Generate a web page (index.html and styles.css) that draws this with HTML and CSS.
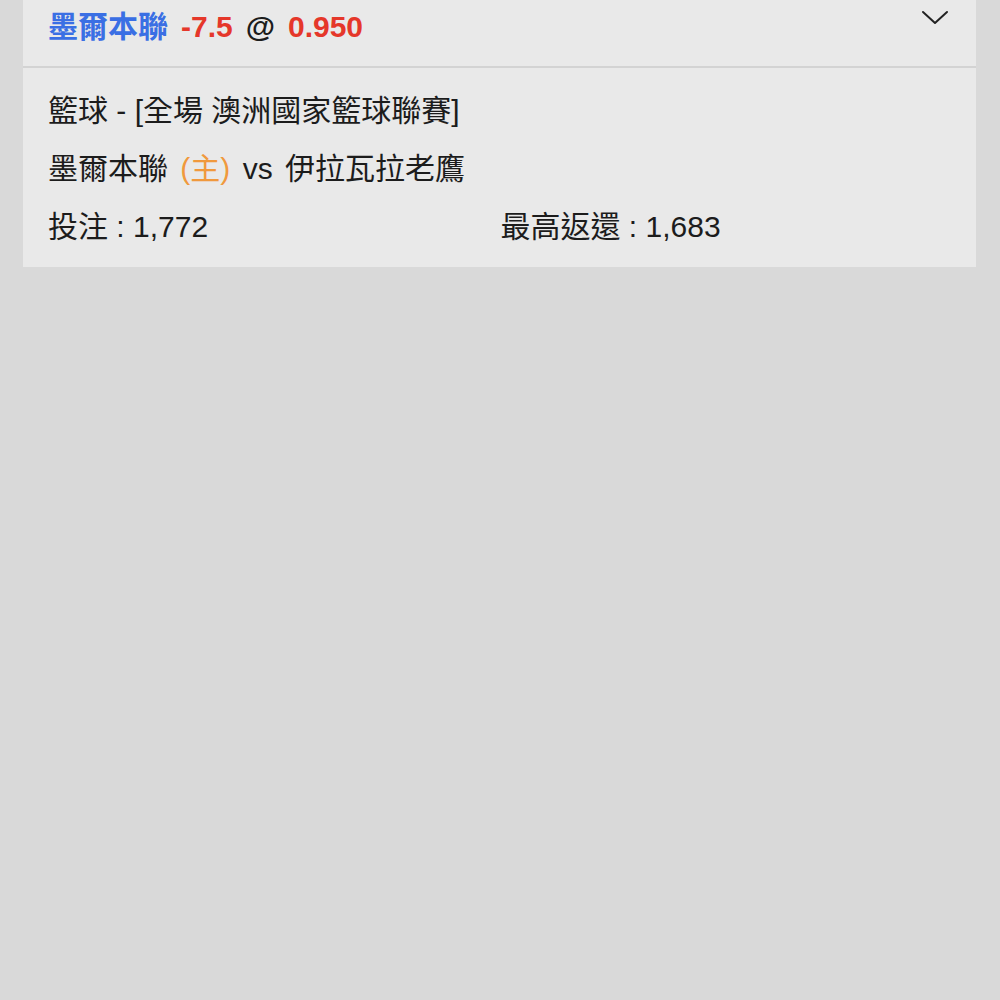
FILE: index.html
```html
<!DOCTYPE html>
<html lang="zh-Hant">
<head>
<meta charset="utf-8">
<link rel="stylesheet" href="styles.css">
</head>
<body>
<div class="card">
  <div class="card-head">
    <div class="title">
      <span class="team">墨爾本聯</span>
      <span class="red">-7.5</span>
      <span class="at">@</span>
      <span class="red">0.950</span>
    </div>
    <svg class="chev" width="28" height="16" viewBox="0 0 28 16"><polyline points="2,2 14,13 26,2" fill="none" stroke="#222" stroke-width="2" stroke-linecap="round" stroke-linejoin="round"/></svg>
  </div>
  <div class="card-body">
    <div class="line">籃球 - [全場 澳洲國家籃球聯賽]</div>
    <div class="line match">墨爾本聯 <span class="home">(主)</span> vs 伊拉瓦拉老鷹</div>
    <div class="line stats">
      <div>投注 : 1,772</div>
      <div>最高返還 : 1,683</div>
    </div>
  </div>
</div>
</body>
</html>
```
FILE: styles.css
```css
html, body {
  margin: 0;
  padding: 0;
  background: #d9d9d9;
  font-family: "Liberation Sans", "Noto Sans CJK TC", sans-serif;
  color: #1c1c1c;
}
.card {
  margin: 0 24px 0 23px;
  background: #e9e9e9;
}
.card-head {
  display: flex;
  justify-content: space-between;
  align-items: flex-start;
  height: 66px;
  padding: 0 27px 0 25px;
  border-bottom: 2px solid #d3d3d3;
}
.title {
  font-size: 30px;
  font-weight: bold;
  line-height: 54px;
  display: flex;
  gap: 13px;
}
.team { color: #3a6fe4; }
.red { color: #e5372a; }
.at { color: #1c1c1c; }
.chev { margin-top: 10px; }
.card-body {
  padding: 14px 25px 11px;
  font-size: 30px;
}
.line {
  line-height: 58px;
  height: 58px;
  white-space: nowrap;
}
.match { word-spacing: 4px; }
.home { color: #f0993d; }
.stats {
  display: grid;
  grid-template-columns: 1fr 1fr;
}
.stats > div:last-child { padding-left: 1px; }
```
